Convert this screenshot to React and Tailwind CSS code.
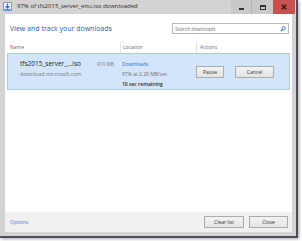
export default function App() {
  const font = { fontFamily: '"Open Sans", "Noto Sans", sans-serif' };
  return (
    <div className="w-[302px] h-[241px] bg-white overflow-hidden" style={font}>
      <div className="w-[298px] h-[238px] bg-[#d3d3d3] border-r-2 border-b-2 border-[#4a505a] shadow-[1px_1px_3px_rgba(0,0,0,0.35)] flex flex-col">
        {/* Title bar */}
        <div className="h-[14px] flex items-start shrink-0">
          <div className="w-[9px] h-[9px] mt-[2px] ml-[3px] relative">
            <svg width="9" height="9" viewBox="0 0 9 9">
              <rect x="0.5" y="0.5" width="8" height="8" fill="#eef4fb" stroke="#7a9cc6" />
              <path d="M4.5 1.5v4.5M2.5 4.2l2 2 2-2" stroke="#2f6fc0" strokeWidth="1.2" fill="none" />
              <rect x="1.5" y="7" width="6" height="1" fill="#4fa34f" />
            </svg>
          </div>
          <div className="ml-[5px] mt-[2px] text-[6px] leading-[8px] text-[#2a2a2a] whitespace-nowrap">
            97% of tfs2015_server_enu.iso downloaded
          </div>
          <div className="flex-1" />
          <div className="flex h-[14px] mr-[1px]">
            <div className="w-[21px] h-[14px] bg-[#c8c8c8] border-r border-[#b4b4b4] flex items-center justify-center">
              <div className="w-[5px] h-[2px] bg-[#333] mt-[3px]" />
            </div>
            <div className="w-[21px] h-[14px] bg-[#c8c8c8] flex items-center justify-center">
              <div className="w-[6px] h-[5px] border border-t-2 border-[#333]" />
            </div>
            <div className="w-[22px] h-[14px] bg-[#c9504e] flex items-center justify-center">
              <svg width="6" height="6" viewBox="0 0 6 6">
                <path d="M0.8 0.8L5.2 5.2M5.2 0.8L0.8 5.2" stroke="#2a1a1a" strokeWidth="1.4" />
              </svg>
            </div>
          </div>
        </div>

        {/* Content */}
        <div className="flex-1 ml-[5px] mr-[4px] mb-[4px] bg-white flex flex-col">
          {/* Heading + search */}
          <div className="flex items-center mt-[9px] h-[11px] shrink-0">
            <div className="pl-[5px] text-[7px] leading-[10px] text-[#2a5ea8] whitespace-nowrap">
              View and track your downloads
            </div>
            <div className="flex-1" />
            <div className="w-[117px] h-[11px] mr-[3px] border border-[#b9b9b9] bg-white flex items-center">
              <span className="pl-[2px] text-[5px] italic text-[#7a7a7a] leading-[8px]">Search downloads</span>
              <div className="flex-1" />
              <svg width="6" height="6" viewBox="0 0 6 6" className="mr-[2px]">
                <circle cx="3.7" cy="2.3" r="1.6" stroke="#2f6fc0" strokeWidth="0.9" fill="none" />
                <path d="M2.5 3.5L0.8 5.2" stroke="#2f6fc0" strokeWidth="1.1" />
              </svg>
            </div>
          </div>

          {/* Header row */}
          <div className="flex mt-[8px] h-[11px] shrink-0 text-[5px] leading-[11px] text-[#6d6d6d]">
            <div className="w-[115px] pl-[5px]">Name</div>
            <div className="w-[76px] border-l border-[#e3e3e3] pl-[2px]">Location</div>
            <div className="flex-1 border-l border-[#e3e3e3] pl-[3px]">Actions</div>
          </div>

          {/* Download row */}
          <div className="mx-[2px] h-[37px] shrink-0 bg-[#d3e5fa] border border-[#a9c9ef] flex">
            <div className="w-[112px] pl-[12px] pt-[5px]">
              <div className="flex items-center h-[10px]">
                <span className="w-[77px] text-[6.5px] leading-[10px] text-[#1e1e1e] whitespace-nowrap">tfs2015_server_...iso</span>
                <span className="text-[4.8px] leading-[10px] text-[#777]">910 MB</span>
              </div>
              <div className="text-[5.3px] leading-[10px] text-[#7a7a7a] whitespace-nowrap">download.microsoft.com</div>
            </div>
            <div className="w-[76px] pl-[2px] pt-[5px] text-[5px] leading-[10px] whitespace-nowrap">
              <div className="text-[#2f6fc8]">Downloads</div>
              <div className="text-[#6e6e6e]">97% at 2.28 MB/sec</div>
              <div className="text-[#2a2a2a] font-semibold">10 sec remaining</div>
            </div>
            <div className="flex items-start pt-[12px] gap-[11px]">
              <button className="w-[28px] h-[12px] border border-[#acacac] bg-gradient-to-b from-[#f3f3f3] to-[#e4e4e4] text-[5px] leading-[10px] text-[#333]">Pause</button>
              <button className="w-[39px] h-[12px] border border-[#acacac] bg-gradient-to-b from-[#f3f3f3] to-[#e4e4e4] text-[5px] leading-[10px] text-[#333]">Cancel</button>
            </div>
          </div>

          <div className="flex-1" />

          {/* Footer */}
          <div className="h-[20px] shrink-0 bg-[#f0f0f0] flex items-center">
            <div className="pl-[5px] text-[5px] leading-[8px] text-[#3a7fd6]">Options</div>
            <div className="flex-1" />
            <div className="flex gap-[5px] mr-[4px]">
              <button className="w-[40px] h-[12px] border border-[#acacac] bg-gradient-to-b from-[#f3f3f3] to-[#e4e4e4] text-[5px] leading-[10px] text-[#333]">Clear list</button>
              <button className="w-[39px] h-[12px] border border-[#acacac] bg-gradient-to-b from-[#f3f3f3] to-[#e4e4e4] text-[5px] leading-[10px] text-[#333]">Close</button>
            </div>
          </div>
        </div>
      </div>
    </div>
  );
}
